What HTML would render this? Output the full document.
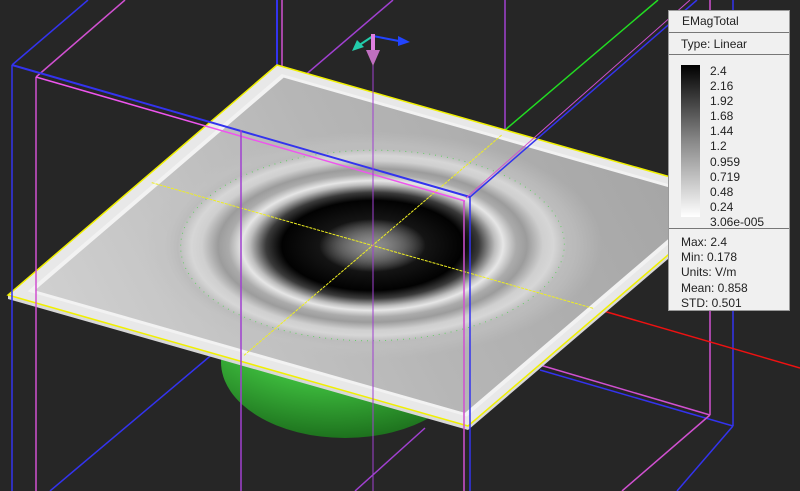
<!DOCTYPE html>
<html><head><meta charset="utf-8"><style>
html,body{margin:0;padding:0;background:#262626;}
body{width:800px;height:491px;overflow:hidden;position:relative;font-family:"Liberation Sans",Arial,sans-serif;}
svg{position:absolute;left:0;top:0;}
.leg{position:absolute;left:668px;top:10px;width:122px;height:301px;background:#f0f0f0;border:1px solid #9a9a9a;box-sizing:border-box;color:#222;font-size:12px;}
.row{position:absolute;left:0;width:120px;border-bottom:1px solid #777;}
.t{position:absolute;left:12px;white-space:nowrap;line-height:14px;}
</style></head><body>
<svg width="800" height="491" viewBox="0 0 800 491">
<defs>
<radialGradient id="grn" cx="0.45" cy="0.2" r="0.9">
<stop offset="0" stop-color="#6be06b"/><stop offset="0.5" stop-color="#3cb83c"/><stop offset="1" stop-color="#155e15"/>
</radialGradient>
<linearGradient id="pl" x1="0" y1="1" x2="1" y2="0">
<stop offset="0" stop-color="#d0d0d0"/><stop offset="0.5" stop-color="#b6b6b6"/><stop offset="1" stop-color="#a4a4a4"/>
</linearGradient>
<radialGradient id="fld" cx="50" cy="50" r="50" gradientUnits="userSpaceOnUse">
<stop offset="0" stop-color="#8a8a8a"/>
<stop offset="0.12" stop-color="#484848"/>
<stop offset="0.2" stop-color="#141414"/>
<stop offset="0.34" stop-color="#020202"/>
<stop offset="0.40" stop-color="#3a3a3a"/>
<stop offset="0.46" stop-color="#bdbdbd"/>
<stop offset="0.49" stop-color="#e6e6e6"/>
<stop offset="0.54" stop-color="#ababab"/>
<stop offset="0.58" stop-color="#9c9c9c"/>
<stop offset="0.64" stop-color="#cfcfcf"/>
<stop offset="0.68" stop-color="#d6d6d6"/>
<stop offset="0.73" stop-color="#bcbcbc"/>
<stop offset="0.78" stop-color="#c2c2c2" stop-opacity="0.5"/>
<stop offset="0.86" stop-color="#c0c0c0" stop-opacity="0"/>
</radialGradient>
<radialGradient id="ctr" cx="50" cy="50" r="10" gradientUnits="userSpaceOnUse">
<stop offset="0" stop-color="#909090" stop-opacity="0.9"/><stop offset="1" stop-color="#808080" stop-opacity="0"/>
</radialGradient>
</defs>
<g fill="none" stroke-width="1.5">
<line x1="50" y1="491" x2="215" y2="352" stroke="#3333ee"/>
<line x1="355" y1="491" x2="425" y2="428" stroke="#a040d0"/>
<line x1="733" y1="426" x2="540" y2="370" stroke="#3333ee"/>
<line x1="710" y1="415" x2="540" y2="365" stroke="#d050d0"/>
<line x1="733" y1="426" x2="677" y2="491" stroke="#3333ee"/>
<line x1="710" y1="415" x2="622" y2="491" stroke="#d050d0"/>
<line x1="733" y1="0" x2="733" y2="426" stroke="#3333ee"/>
<line x1="710" y1="0" x2="710" y2="415" stroke="#d050d0"/>
<line x1="600" y1="310" x2="800" y2="368" stroke="#ee1111"/>
<line x1="12" y1="65" x2="88" y2="0" stroke="#3333ee"/>
<line x1="36" y1="77" x2="125" y2="0" stroke="#d050d0"/>
<line x1="277" y1="0" x2="277" y2="66" stroke="#3333ee" stroke-width="2"/>
<line x1="282" y1="0" x2="282" y2="76" stroke="#d050d0"/>
<line x1="505" y1="0" x2="505" y2="130" stroke="#a040d0"/>
<line x1="505" y1="130" x2="658" y2="0" stroke="#22dd22"/>
<line x1="241" y1="130" x2="393" y2="0" stroke="#a040d0"/>
</g>
<ellipse cx="345" cy="362" rx="124" ry="76" fill="url(#grn)"/>
<polygon points="8,299 468,430 737,200 737,196 468,426 8,295" fill="#d8d8d8"/>
<polygon points="277,65 737,196 468,426 8,295" fill="#e8e8e8"/>
<g transform="matrix(4.6,1.31,-2.69,2.30,277,65)">
<polygon points="2.5,2.5 98,2.5 98,97 2.5,97" fill="#f2f2f2"/>
<polygon points="3.5,3.5 97,3.5 97,96 3.5,96" fill="url(#pl)"/>
<circle cx="50" cy="50" r="50" fill="url(#fld)"/>
<ellipse cx="50" cy="50" rx="10" ry="10" fill="url(#ctr)"/>
<circle cx="50" cy="50" r="36" fill="none" stroke="#66cc66" stroke-width="1" stroke-dasharray="1 5" vector-effect="non-scaling-stroke"/>
<line x1="50" y1="2" x2="50" y2="98" stroke="#eeee22" stroke-width="1" stroke-dasharray="3 1" vector-effect="non-scaling-stroke"/>
<line x1="2" y1="50" x2="98" y2="50" stroke="#eeee22" stroke-width="1" stroke-dasharray="3 1" vector-effect="non-scaling-stroke"/>
</g>
<polygon points="277,65 737,196 468,426 8,295" fill="none" stroke="#f0f000" stroke-width="1.5"/>
<g fill="none" stroke-width="1.5">
<line x1="12" y1="65" x2="12" y2="491" stroke="#3333ee"/>
<line x1="36" y1="77" x2="36" y2="491" stroke="#d050d0"/>
<line x1="12" y1="65" x2="470" y2="197" stroke="#3333ee" stroke-width="2"/>
<line x1="36" y1="77" x2="465" y2="201" stroke="#ee55ee"/>
<line x1="470" y1="197" x2="470" y2="491" stroke="#3333ee"/>
<line x1="464" y1="201" x2="464" y2="491" stroke="#d050d0"/>
<line x1="470" y1="197" x2="697" y2="0" stroke="#3333ee"/>
<line x1="466" y1="198" x2="690" y2="0" stroke="#d050d0" stroke-width="1"/>
<line x1="241" y1="130" x2="241" y2="491" stroke="#a040d0"/>
<line x1="373" y1="65" x2="373" y2="491" stroke="#a040d0" stroke-width="1"/>
</g>
<line x1="373" y1="36" x2="404" y2="42" stroke="#2244ff" stroke-width="2"/>
<polygon points="398,36 410,42 398,46" fill="#2244ff"/>
<line x1="373" y1="36" x2="358" y2="46" stroke="#22ccaa" stroke-width="2"/>
<polygon points="352,51 357,40 364,47" fill="#22ccaa"/>
<rect x="371" y="34" width="4" height="18" fill="#e080e0"/>
<polygon points="366,50 380,50 373,66" fill="#c070c0"/>
</svg>
<div class="leg">
<div class="row" style="top:0;height:21px"></div>
<div class="t" style="top:3px;left:13px">EMagTotal</div>
<div class="row" style="top:22px;height:21px"></div>
<div class="t" style="top:26px;left:12px">Type: Linear</div>
<div class="row" style="top:44px;height:173px"></div>
<div style="position:absolute;left:12px;top:54px;width:19px;height:152px;background:linear-gradient(#000,#888 50%,#fff)"></div>
<div class="t" style="left:41px;top:53px;line-height:15.1px">2.4<br>2.16<br>1.92<br>1.68<br>1.44<br>1.2<br>0.959<br>0.719<br>0.48<br>0.24<br>3.06e-005</div>
<div class="t" style="top:224px;line-height:15.2px">Max: 2.4<br>Min: 0.178<br>Units: V/m<br>Mean: 0.858<br>STD: 0.501</div>
</div>
</body></html>
